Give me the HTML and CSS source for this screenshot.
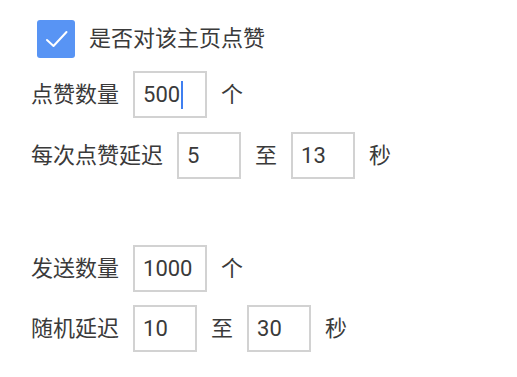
FILE: index.html
```html
<!DOCTYPE html>
<html lang="zh">
<head>
<meta charset="utf-8">
<title>点赞设置</title>
<link rel="stylesheet" href="styles.css">
</head>
<body>
<div class="panel">
  <div class="row check-row">
    <span class="checkbox">
      <svg viewBox="0 0 38 38" width="38" height="38"><path d="M10 20 L16.5 26 L29.5 12" fill="none" stroke="#fff" stroke-width="2" stroke-linecap="round" stroke-linejoin="round"/></svg>
    </span>
    <span class="label">是否对该主页点赞</span>
  </div>
  <div class="row row-2">
    <span class="label">点赞数量</span>
    <span class="field wide">500<span class="caret"></span></span>
    <span class="label">个</span>
  </div>
  <div class="row">
    <span class="label">每次点赞延迟</span>
    <span class="field">5</span>
    <span class="label">至</span>
    <span class="field">13</span>
    <span class="label">秒</span>
  </div>
  <div class="row row-4">
    <span class="label">发送数量</span>
    <span class="field wide">1000</span>
    <span class="label">个</span>
  </div>
  <div class="row row-5">
    <span class="label">随机延迟</span>
    <span class="field">10</span>
    <span class="label">至</span>
    <span class="field">30</span>
    <span class="label">秒</span>
  </div>
</div>
</body>
</html>
```
FILE: styles.css
```css
html, body {
  margin: 0;
  padding: 0;
  background: #ffffff;
}
.panel {
  display: flex;
  flex-direction: column;
  padding: 15px 0 0 31px;
  font-family: Roboto, "Noto Sans CJK SC", sans-serif;
  font-size: 22px;
  color: #3a3a3a;
}
.row {
  display: flex;
  align-items: center;
  height: 47px;
  gap: 14px;
  margin-top: 14px;
}
.check-row {
  margin-top: 0;
  padding-left: 6px;
}
.row-2 {
  margin-top: 9px;
}
.row-4 {
  margin-top: 66px;
}
.row-5 {
  margin-top: 13px;
}
.checkbox {
  width: 38px;
  height: 38px;
  border-radius: 3px;
  background: #5894f4;
  display: flex;
}
.label {
  line-height: 1;
  white-space: nowrap;
}
.field {
  box-sizing: border-box;
  width: 64px;
  height: 47px;
  border: 2px solid #d2d2d2;
  padding-left: 8px;
  display: flex;
  align-items: center;
  line-height: 1;
}
.field.wide {
  width: 74px;
}
.caret {
  width: 2px;
  height: 28px;
  background: #3f7ff0;
  margin-left: 1px;
}
```
